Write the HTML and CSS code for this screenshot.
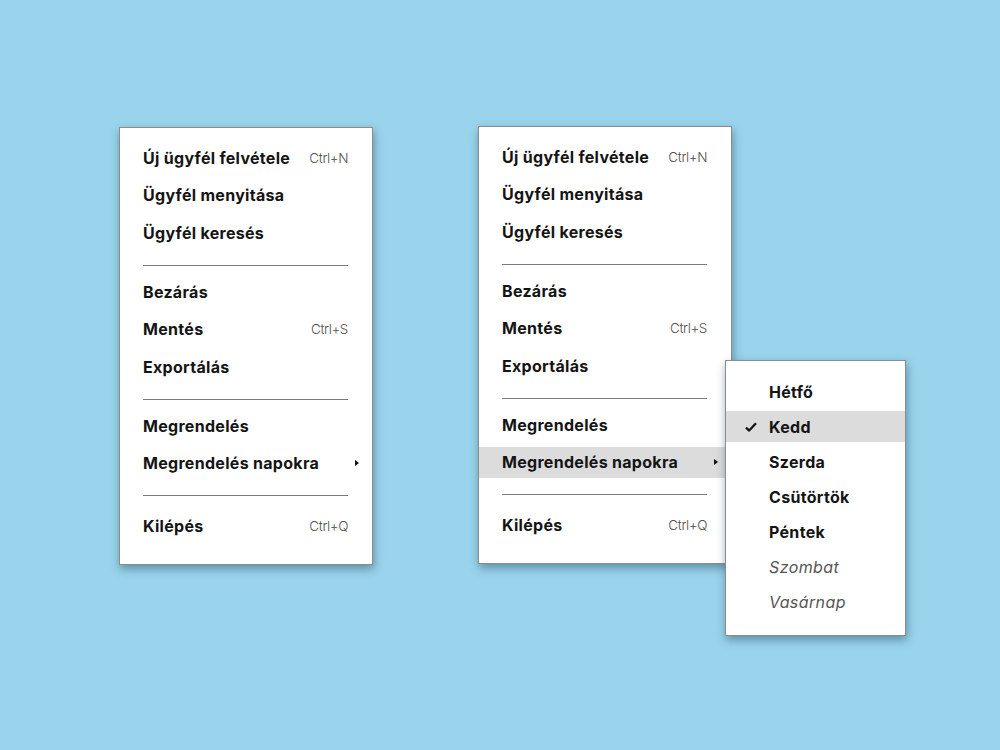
FILE: index.html
```html
<!DOCTYPE html>
<html lang="hu">
<head>
<meta charset="utf-8">
<title>Menü</title>
<link rel="stylesheet" href="styles.css">
</head>
<body>
<div class="stage">
  <div class="menu">
    <div class="item"><span class="label">Új ügyfél felvétele</span><span class="shortcut">Ctrl+N</span></div>
    <div class="item"><span class="label">Ügyfél menyitása</span></div>
    <div class="item"><span class="label">Ügyfél keresés</span></div>
    <div class="sep"></div>
    <div class="item"><span class="label">Bezárás</span></div>
    <div class="item"><span class="label">Mentés</span><span class="shortcut">Ctrl+S</span></div>
    <div class="item"><span class="label">Exportálás</span></div>
    <div class="sep"></div>
    <div class="item"><span class="label">Megrendelés</span></div>
    <div class="item"><span class="label">Megrendelés napokra</span><span class="arrow"></span></div>
    <div class="sep sep-last"></div>
    <div class="item"><span class="label">Kilépés</span><span class="shortcut">Ctrl+Q</span></div>
  </div>

  <div class="menu menu-open">
    <div class="item"><span class="label">Új ügyfél felvétele</span><span class="shortcut">Ctrl+N</span></div>
    <div class="item"><span class="label">Ügyfél menyitása</span></div>
    <div class="item"><span class="label">Ügyfél keresés</span></div>
    <div class="sep"></div>
    <div class="item"><span class="label">Bezárás</span></div>
    <div class="item"><span class="label">Mentés</span><span class="shortcut">Ctrl+S</span></div>
    <div class="item"><span class="label">Exportálás</span></div>
    <div class="sep"></div>
    <div class="item"><span class="label">Megrendelés</span></div>
    <div class="item active"><span class="label">Megrendelés napokra</span><span class="arrow"></span></div>
    <div class="sep sep-last"></div>
    <div class="item"><span class="label">Kilépés</span><span class="shortcut">Ctrl+Q</span></div>

    <div class="submenu">
      <div class="sub-item"><span class="check"></span><span class="label">Hétfő</span></div>
      <div class="sub-item active"><span class="check"><svg width="12" height="10" viewBox="0 0 12 10"><path d="M1 5.6 L4.2 8.6 L11 1.2" fill="none" stroke="#111" stroke-width="2.2" stroke-linejoin="round"/></svg></span><span class="label">Kedd</span></div>
      <div class="sub-item"><span class="check"></span><span class="label">Szerda</span></div>
      <div class="sub-item"><span class="check"></span><span class="label">Csütörtök</span></div>
      <div class="sub-item"><span class="check"></span><span class="label">Péntek</span></div>
      <div class="sub-item disabled"><span class="check"></span><span class="label">Szombat</span></div>
      <div class="sub-item disabled"><span class="check"></span><span class="label">Vasárnap</span></div>
    </div>
  </div>
</div>
</body>
</html>
```

FILE: styles.css
```css
html, body {
  margin: 0;
  padding: 0;
}

body {
  background: #9ad4ec;
  width: 1000px;
  height: 750px;
  overflow: hidden;
  font-family: Inter, "Open Sans", "Liberation Sans", sans-serif;
  color: #141414;
}

.stage {
  display: flex;
  align-items: flex-start;
  gap: 105px;
  padding: 127px 0 0 119px;
}

.menu {
  position: relative;
  box-sizing: border-box;
  width: 254px;
  background: #fff;
  border: 1px solid #8c8c8c;
  box-shadow: 1px 4px 9px rgba(20, 60, 80, 0.45);
  padding: 14px 0 22px;
  display: flex;
  flex-direction: column;
  gap: 6.5px;
}

.menu-open {
  margin-top: -1px;
}

.item {
  height: 31px;
  box-sizing: border-box;
  padding: 0 24px 0 23px;
  display: flex;
  align-items: center;
  position: relative;
}

.item.active {
  background: #dcdcdc;
}

.label {
  font-size: 16px;
  font-weight: 700;
  letter-spacing: 0.3px;
  white-space: nowrap;
}

.shortcut {
  margin-left: auto;
  font-size: 13.5px;
  font-weight: 300;
  color: #505050;
  letter-spacing: -0.4px;
}

.arrow {
  position: absolute;
  right: 13px;
  top: 12px;
  width: 0;
  height: 0;
  border-top: 3.5px solid transparent;
  border-bottom: 3.5px solid transparent;
  border-left: 4px solid #111;
}

.sep {
  height: 1px;
  background: #7a7a7a;
  margin: 10px 24px 4px 23px;
}

.sep-last {
  margin-bottom: 8px;
}

.submenu {
  position: absolute;
  left: 246px;
  top: 233px;
  box-sizing: border-box;
  width: 181px;
  background: #fff;
  border: 1px solid #8c8c8c;
  box-shadow: 1px 4px 9px rgba(20, 60, 80, 0.45);
  padding: 15px 0 18px;
  display: flex;
  flex-direction: column;
  gap: 4px;
}

.sub-item {
  height: 31px;
  display: flex;
  align-items: center;
}

.sub-item.active {
  background: #dcdcdc;
}

.check {
  width: 43px;
  box-sizing: border-box;
  padding-left: 19px;
  display: flex;
  align-items: center;
}

.check svg {
  display: block;
}

.sub-item.disabled .label {
  font-weight: 400;
  font-style: italic;
  color: #555;
  letter-spacing: 0.4px;
}
```
